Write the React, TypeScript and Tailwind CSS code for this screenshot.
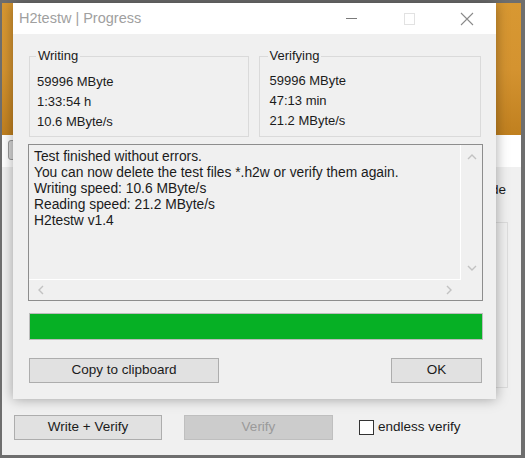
import React from "react";

const font = "font-['Liberation_Sans',Arial,sans-serif]";

const Chevron = ({ dir }: { dir: "up" | "down" | "left" | "right" }) => {
  const d = {
    up: "M1 6 L5 2 L9 6",
    down: "M1 2 L5 6 L9 2",
    left: "M6 1 L2 5 L6 9",
    right: "M2 1 L6 5 L2 9"
  }[dir];
  const vertical = dir === "up" || dir === "down";
  return (
    <svg
      width={vertical ? 10 : 8}
      height={vertical ? 8 : 10}
      viewBox={vertical ? "0 0 10 8" : "0 0 8 10"}
      fill="none"
      stroke="#c2c2c2"
      strokeWidth="1.4"
    >
      <path d={d} />
    </svg>
  );
};

const GroupBox = ({
  title,
  lines,
  className = ""
}: {
  title: string;
  lines: string[];
  className?: string;
}) => (
  <fieldset className={"flex-1 border border-[#dadada] pb-[4px] " + className}>
    <legend className="px-[2px] text-[13px] leading-[16px]">{title}</legend>
    {lines.map((l) => (
      <div key={l} className="text-[13px] leading-[20px]">
        {l}
      </div>
    ))}
  </fieldset>
);

const WinButton = ({
  children,
  className = "",
  disabled = false
}: {
  children: React.ReactNode;
  className?: string;
  disabled?: boolean;
}) => (
  <div
    className={
      "flex h-[25px] items-center justify-center border text-[13.5px] " +
      (disabled
        ? "border-[#bfbfbf] bg-[#cccccc] text-[#9a9a9a] "
        : "border-[#adadad] bg-[#e1e1e1] text-[#1b1b1b] ") +
      className
    }
  >
    {children}
  </div>
);

const ProgressDialog = () => (
  <div className="absolute left-[11px] top-0 flex h-[396px] w-[483px] flex-col bg-[#f0f0f0] shadow-[0_0_12px_rgba(0,0,0,0.35)]">
    {/* title bar */}
    <div className="flex h-[31px] items-center bg-white">
      <div className="flex-1 pl-[6px] text-[14.5px] text-[#a0a0a0]">H2testw | Progress</div>
      <div className="flex h-full w-[58px] items-center justify-center">
        <div className="h-px w-[11px] bg-[#7a7a7a]" />
      </div>
      <div className="flex h-full w-[58px] items-center justify-center">
        <div className="h-[12px] w-[11px] border border-[#e2e2e2]" />
      </div>
      <div className="flex h-full w-[58px] items-center justify-center">
        <svg width="14" height="14" viewBox="0 0 14 14" stroke="#8a8a8a" strokeWidth="1.1">
          <path d="M1 1 L13 13 M13 1 L1 13" />
        </svg>
      </div>
    </div>

    <div className="flex flex-1 flex-col pl-[15px] pr-[13px] pt-[14px] text-[#1b1b1b]">
      <div className="flex gap-[10px] pl-px pr-[2px]">
        <GroupBox
          title="Writing"
          lines={["59996 MByte", "1:33:54 h", "10.6 MByte/s"]}
          className="pl-[7px] pt-[8px] [&>legend]:-ml-px"
        />
        <GroupBox
          title="Verifying"
          lines={["59996 MByte", "47:13 min", "21.2 MByte/s"]}
          className="pl-[10px] pt-[7px] [&>legend]:-ml-[2px]"
        />
      </div>

      {/* log box */}
      <div className="mt-[7px] grid h-[157px] grid-cols-[1fr_21px] grid-rows-[1fr_20px] border border-[#8d8d8d]">
        <div className="border-b border-r border-white px-[5px] pt-[4px] text-[13.8px] leading-[16px]">
          <div>Test finished without errors.</div>
          <div>You can now delete the test files *.h2w or verify them again.</div>
          <div>Writing speed: 10.6 MByte/s</div>
          <div>Reading speed: 21.2 MByte/s</div>
          <div>H2testw v1.4</div>
        </div>
        <div className="flex flex-col items-center justify-between pt-[8px] pb-[8px]">
          <Chevron dir="up" />
          <Chevron dir="down" />
        </div>
        <div className="flex items-center justify-between pl-[8px] pr-[8px]">
          <Chevron dir="left" />
          <Chevron dir="right" />
        </div>
        <div />
      </div>

      <div className="mt-[12px] ml-px h-[27px] border border-[#bcbcbc] bg-[#06b025]" />

      <div className="mt-[18px] flex justify-between pl-px pr-px">
        <WinButton className="w-[190px]">Copy to clipboard</WinButton>
        <WinButton className="w-[91px]">OK</WinButton>
      </div>
    </div>
  </div>
);

export default function App() {
  return (
    <div className={"h-[458px] w-[525px] overflow-hidden bg-[#6e6e6e] pt-[3px] pr-[4px] pb-[3px] pl-[2px] " + font}>
      <div className="relative flex h-full flex-col bg-[#f0f0f0] text-[#1b1b1b]">
        <div className="h-[132px] bg-linear-to-b from-[#d89832] via-[#d49330] to-[#c0801f]" />
        <div className="flex h-[32px] items-start bg-white pl-[6px] pt-[5px]">
          <div className="h-[20px] w-[12px] rounded-[3px] border border-[#9a9a9a] bg-[#d6d6d6]" />
        </div>
        <div className="mt-[15px] pr-[15px] text-right text-[13.5px] leading-[16px]">Quick mode</div>
        <div className="mt-[24px] mr-[13px] ml-[260px] h-[166px] border border-[#dcdcdc]" />
        <div className="mt-[27px] flex items-center pl-[12px]">
          <WinButton className="w-[148px]">Write + Verify</WinButton>
          <WinButton disabled className="ml-[22px] w-[149px]">
            Verify
          </WinButton>
          <div className="ml-[26px] flex items-center gap-[4px] text-[13.5px]">
            <div className="h-[15px] w-[15px] border border-[#333333] bg-white" />
            <span>endless verify</span>
          </div>
        </div>
        <ProgressDialog />
      </div>
    </div>
  );
}
